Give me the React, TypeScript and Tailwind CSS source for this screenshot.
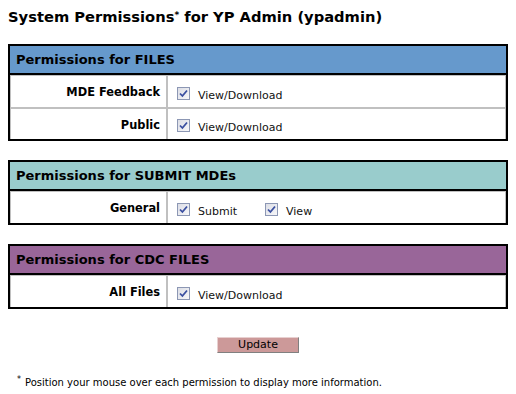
import React from 'react';

type Opt = { label: string };
type Row = { name: string; opts: Opt[] };
type Section = { title: string; bg: string; rows: Row[] };

const sections: Section[] = [
  {
    title: 'Permissions for FILES',
    bg: 'bg-[#6699cc]',
    rows: [
      { name: 'MDE Feedback', opts: [{ label: 'View/Download' }] },
      { name: 'Public', opts: [{ label: 'View/Download' }] },
    ],
  },
  {
    title: 'Permissions for SUBMIT MDEs',
    bg: 'bg-[#99cccc]',
    rows: [{ name: 'General', opts: [{ label: 'Submit' }, { label: 'View' }] }],
  },
  {
    title: 'Permissions for CDC FILES',
    bg: 'bg-[#996699]',
    rows: [{ name: 'All Files', opts: [{ label: 'View/Download' }] }],
  },
];

function Check() {
  return (
    <span className="flex h-[13px] w-[13px] shrink-0 items-center justify-center border border-[#8c97b4] bg-gradient-to-br from-[#dcdee6] to-[#f7f7f9]">
      <svg width="9" height="9" viewBox="0 0 9 9">
        <path d="M1 4.5 L3.4 7 L8 1.5" fill="none" stroke="#3a4fa0" strokeWidth="1.8" />
      </svg>
    </span>
  );
}

function PermTable({ s }: { s: Section }) {
  return (
    <div className="w-[500px] border-2 border-black">
      <div className={`flex h-[29px] items-center border-b-2 border-black pl-[6px] text-[13px] font-bold text-black ${s.bg}`}>
        {s.title}
      </div>
      {s.rows.map((r, i) => (
        <div key={r.name} className={`flex h-[32px] border-r border-[#c0c0c0] ${i > 0 ? 'border-t-2' : 'border-t'}`}>
          <div className="flex w-[156px] items-center justify-end border-l border-[#c0c0c0] pr-[6px] pt-[3px] text-[11.4px] font-bold text-black">
            {r.name}
          </div>
          <div className="flex flex-1 items-center gap-[28px] border-l-2 border-[#c0c0c0] pl-[9px] pt-[3px]">
            {r.opts.map(o => (
              <label key={o.label} className="flex items-center gap-[8px] text-[11px] text-[#111]">
                <Check />
                <span className="pt-[6px]">{o.label}</span>
              </label>
            ))}
          </div>
        </div>
      ))}
    </div>
  );
}

export default function App() {
  return (
    <main className="min-h-[394px] bg-white px-2 pt-[7px] text-black [font-family:'DejaVu_Sans',Verdana,sans-serif]">
      <h1 className="text-[14.7px] font-bold leading-[20px]">
        System Permissions<sup className="text-[9px]">*</sup> for YP Admin (ypadmin)
      </h1>
      <div className="mt-[17px] flex flex-col gap-[19px]">
        {sections.map(s => (
          <PermTable key={s.title} s={s} />
        ))}
      </div>
      <div className="flex w-[500px] justify-center pt-[28px]">
        <button className="h-[16px] w-[82px] border border-t-[#e8d0d0] border-l-[#e8d0d0] border-r-[#808080] border-b-[#808080] bg-[#cc9999] text-[11px] leading-[14px] text-black">
          Update
        </button>
      </div>
      <p className="mt-[22px] pl-[9px] text-[10px] text-black">
        <sup className="mr-[4px] text-[8px]">*</sup>Position your mouse over each permission to display more information.
      </p>
    </main>
  );
}
